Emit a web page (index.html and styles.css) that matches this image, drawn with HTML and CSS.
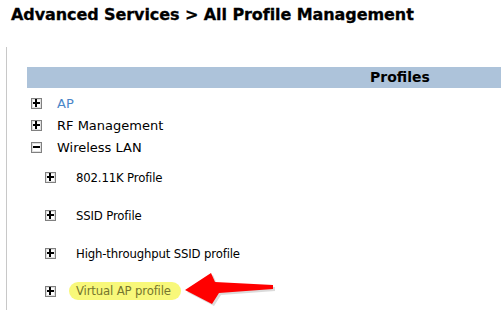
FILE: index.html
```html
<!DOCTYPE html>
<html lang="en">
  <head>
    <meta charset="UTF-8" />
    <title>All Profile Management</title>
    <link rel="stylesheet" href="styles.css">
  </head>
  <body>
    <h1 class="page-title">Advanced Services &gt; All Profile Management</h1>

    <section class="main-content">
      <div class="profiles-head">Profiles</div>

      <ul class="tree">
        <li class="node"><span class="toggle plus"></span><a href="#" class="link">AP</a></li>
        <li class="node"><span class="toggle plus"></span>RF Management</li>
        <li class="node"><span class="toggle minus"></span>Wireless LAN</li>
      </ul>

      <ul class="tree sub">
        <li class="node"><span class="toggle plus"></span>802.11K Profile</li>
        <li class="node"><span class="toggle plus"></span>SSID Profile</li>
        <li class="node"><span class="toggle plus"></span>High-throughput SSID profile</li>
        <li class="node"><span class="toggle plus"></span><span class="marked">Virtual AP profile</span></li>
      </ul>

      <svg class="arrow" width="100" height="45" viewBox="0 0 100 45">
        <polygon points="2,25 28,8 32,17 90,20 90,24 36,28 29,39" fill="#999" opacity="0.35" transform="translate(2,2)" />
        <polygon points="2,25 28,8 32,17 90,20 90,24 36,28 29,39" fill="#f00" />
      </svg>
    </section>
  </body>
</html>
```
FILE: styles.css
```css
body {
  margin: 0;
  font-family: "DejaVu Sans", Verdana, sans-serif;
  color: #000;
  background: #fff;
}

.page-title {
  margin: 0;
  padding: 5px 0 0 11px;
  height: 22px;
  font-size: 16px;
  font-weight: bold;
  letter-spacing: -0.08px;
  -webkit-text-stroke: 0.3px #000;
}

.main-content {
  position: relative;
  margin: 20px 0 0 6px;
  padding: 20px 0 0 20px;
  border-left: 1px solid #c8c8c8;
  height: 243px;
}

.profiles-head {
  height: 21px;
  line-height: 21px;
  background: #adc3da;
  padding-left: 343px;
  font-size: 14px;
  font-weight: bold;
}

.tree {
  list-style: none;
  margin: 0;
  padding: 4px 0 0 4px;
}

.tree .node {
  display: flex;
  align-items: center;
  height: 22px;
  font-size: 13px;
}

.tree.sub {
  padding: 0 0 0 18px;
}

.tree.sub .node {
  height: 38px;
  font-family: "DejaVu Sans Condensed", "DejaVu Sans", sans-serif;
  letter-spacing: -0.15px;
}

.toggle {
  position: relative;
  box-sizing: border-box;
  width: 11px;
  height: 11px;
  margin-right: 15px;
  border: 1px solid #808080;
  background: #fff;
  box-shadow: inset 0 0 0 1px #e0e0e0;
}

.toggle::before,
.toggle::after {
  content: "";
  position: absolute;
  background: #000;
}

.toggle::before {
  left: 1px;
  top: 3px;
  width: 7px;
  height: 2px;
}

.toggle.plus::after {
  left: 3px;
  top: 0;
  width: 2px;
  height: 8px;
}

.tree.sub .toggle {
  margin-right: 20px;
}

.link {
  color: #4a86c8;
  text-decoration: none;
}

.marked {
  display: inline-block;
  height: 18px;
  line-height: 18px;
  margin-left: -7px;
  padding: 0 10px 0 7px;
  border-radius: 9px;
  background: #f8f87a;
  color: #76762e;
}

.arrow {
  position: absolute;
  left: 176px;
  top: 218px;
}
```
